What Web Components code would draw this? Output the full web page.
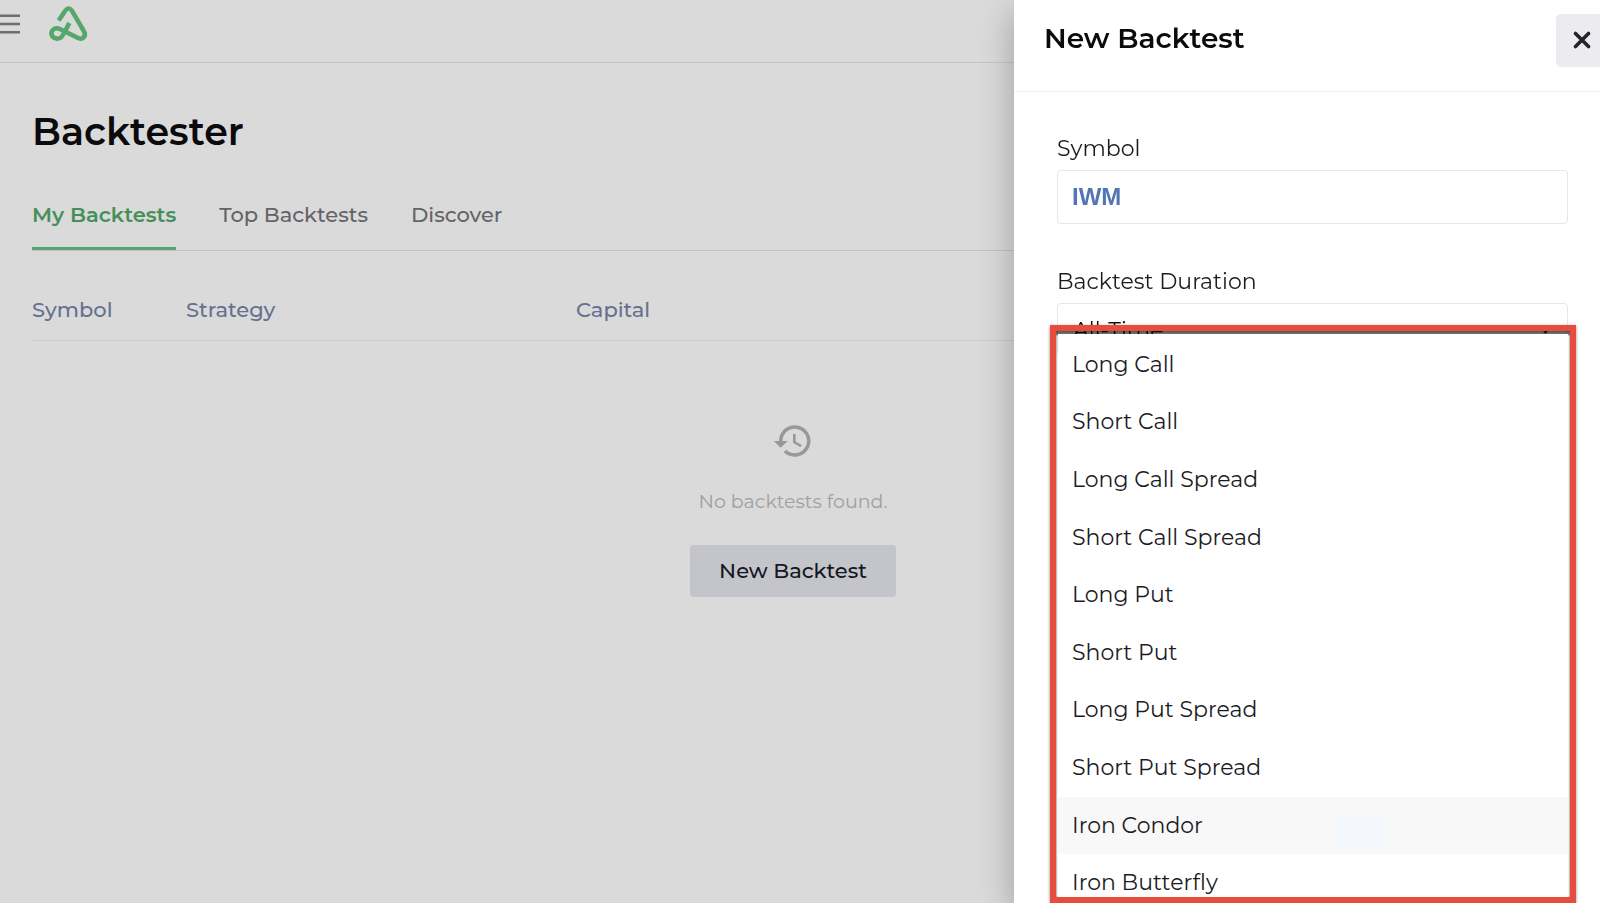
<!DOCTYPE html>
<html lang="en">
<head>
<meta charset="UTF-8">
<meta name="viewport" content="width=device-width, initial-scale=1">
<title>Backtester</title>
<style>
    body {
        margin: 0;
        min-height: 100vh;
        overflow: hidden;
        background: #dadada;
        color: #0b0b0d;
        font-family: Montserrat, "Open Sans", sans-serif;
    }
</style>
</head>
<body>
<app-header></app-header>

<backtest-page heading="Backtester">
    <tab-bar slot="tabs" tabs="My Backtests,Top Backtests,Discover"></tab-bar>
    <backtest-table></backtest-table>
    <empty-state action="New Backtest">No backtests found.</empty-state>
</backtest-page>

<side-panel heading="New Backtest">
    <text-field label="Symbol" value="IWM"></text-field>
    <select-field label="Backtest Duration" value="All-Time"></select-field>
    <strategy-menu slot="menu" active="Iron Condor"></strategy-menu>
</side-panel>

<script>
class AppHeader extends HTMLElement {
    constructor() {
        super();
        this.attachShadow({ mode: 'open' });
    }

    connectedCallback() {
        this.shadowRoot.innerHTML = `
            <style>
                :host {
                    display: flex;
                    align-items: center;
                    gap: 29px;
                    box-sizing: border-box;
                    height: 63px;
                    padding-bottom: 14px;
                    border-bottom: 1px solid #c6c6c6;
                }
                button {
                    border: 0;
                    padding: 0;
                    background: none;
                }
                svg { display: block; }
            </style>
            <button aria-label="Open menu">
                <svg width="20" height="20" viewBox="0 0 20 20" stroke="#6e6e6e" stroke-width="2.6">
                    <path d="M-2 1.7H20M-2 10H20M-2 18.3H20"/>
                </svg>
            </button>
            <a href="#" aria-label="Home">
                <svg width="39" height="37" viewBox="49 5.6 39 37" fill="none" stroke="#55a76b" stroke-width="4.6" stroke-linejoin="round">
                    <path d="M58.7 20.2L65.2 10.4Q68.6 5.9 72 10.4L84 31Q86.2 35.6 82.6 37.7Q80.5 38.8 77.5 37.3L60.5 28.9Q55.2 26.4 52.5 29.9Q50.4 33 52.6 36.2Q56 39.6 60.6 37.4Q62.6 36.2 69.3 22.6"/>
                </svg>
            </a>
        `;
    }
}

class BacktestPage extends HTMLElement {
    constructor() {
        super();
        this.attachShadow({ mode: 'open' });
    }

    connectedCallback() {
        this.shadowRoot.innerHTML = `
            <style>
                :host {
                    display: block;
                    padding: 46px 46px 0 32px;
                }
                h1 {
                    margin: 0 0 47px;
                    font-size: 38px;
                    line-height: 46px;
                    font-weight: 600;
                }
            </style>
            <h1>${this.getAttribute('heading')}</h1>
            <slot name="tabs"></slot>
            <slot></slot>
        `;
    }
}

class TabBar extends HTMLElement {
    constructor() {
        super();
        this.attachShadow({ mode: 'open' });
    }

    connectedCallback() {
        const tabs = this.getAttribute('tabs').split(',');
        this.shadowRoot.innerHTML = `
            <style>
                :host {
                    display: block;
                    border-bottom: 1px solid #c2c2c2;
                }
                nav {
                    display: flex;
                    gap: 43px;
                }
                a {
                    padding-bottom: 19px;
                    border-bottom: 3px solid transparent;
                    color: #646467;
                    font-size: 21px;
                    line-height: 26px;
                    font-weight: 500;
                    text-decoration: none;
                }
                .active {
                    color: #459059;
                    border-color: #55a670;
                    border-radius: 2px 2px 0 0;
                    font-weight: 600;
                }
            </style>
            <nav>
                ${tabs.map((tab, i) => `<a href="#" class="${i === 0 ? 'active' : ''}">${tab}</a>`).join('')}
            </nav>
        `;
    }
}

class BacktestTable extends HTMLElement {
    constructor() {
        super();
        this.attachShadow({ mode: 'open' });
    }

    connectedCallback() {
        this.shadowRoot.innerHTML = `
            <style>
                :host {
                    display: block;
                    margin-top: 46px;
                }
                table {
                    width: 100%;
                    table-layout: fixed;
                    border-collapse: separate;
                    border-spacing: 0;
                }
                th {
                    padding: 0 0 17px;
                    border-bottom: 1px solid #cacaca;
                    color: #66708f;
                    font-size: 21px;
                    line-height: 26px;
                    font-weight: 500;
                    text-align: left;
                }
                .symbol { width: 154px; }
                .strategy { width: 390px; }
            </style>
            <table>
                <thead>
                    <tr><th class="symbol">Symbol</th><th class="strategy">Strategy</th><th>Capital</th></tr>
                </thead>
            </table>
        `;
    }
}

class EmptyState extends HTMLElement {
    constructor() {
        super();
        this.attachShadow({ mode: 'open' });
    }

    connectedCallback() {
        this.shadowRoot.innerHTML = `
            <style>
                :host {
                    display: flex;
                    flex-direction: column;
                    align-items: center;
                    padding-top: 79px;
                }
                p {
                    margin: 28px 0 31px;
                    color: #a0a0a1;
                    font-size: 19px;
                    line-height: 24px;
                }
                button {
                    height: 52px;
                    padding: 0 29px;
                    border: 0;
                    border-radius: 4px;
                    background: #c4c5cb;
                    color: #15161f;
                    font: 500 21px/26px Montserrat, "Open Sans", sans-serif;
                }
            </style>
            <svg width="42" height="42" viewBox="0 0 24 24" fill="#989898">
                <path d="M13 3a9 9 0 0 0-9 9H1l3.9 3.9L9 12H6a7 7 0 1 1 2.06 4.94l-1.42 1.42A9 9 0 1 0 13 3zm-1 5v5l4.28 2.54.72-1.21-3.5-2.08V8z"/>
            </svg>
            <p><slot></slot></p>
            <button>${this.getAttribute('action')}</button>
        `;
    }
}

class SidePanel extends HTMLElement {
    constructor() {
        super();
        this.attachShadow({ mode: 'open' });
    }

    connectedCallback() {
        this.shadowRoot.innerHTML = `
            <style>
                :host {
                    position: fixed;
                    top: 0;
                    right: 0;
                    bottom: 0;
                    width: min(586px, 100%);
                    background: #fff;
                    box-shadow: 0 12px 32px rgba(0, 0, 0, 0.28);
                }
                header {
                    display: flex;
                    align-items: flex-start;
                    justify-content: space-between;
                    box-sizing: border-box;
                    height: 92px;
                    padding: 14px 0 0 30px;
                    border-bottom: 1px solid #f0f0f0;
                    overflow: hidden;
                }
                h2 {
                    margin: 0;
                    padding-top: 7px;
                    font-size: 28px;
                    line-height: 34px;
                    font-weight: 600;
                }
                /* the button runs past the panel's right edge */
                button {
                    display: grid;
                    place-items: center;
                    width: 53px;
                    height: 53px;
                    margin-right: -9px;
                    padding: 0 2px 2px 0;
                    border: 0;
                    border-radius: 5px;
                    background: #ebebf0;
                }
                .body {
                    display: flex;
                    flex-direction: column;
                    gap: 45px;
                    padding: 44px 32px 0 43px;
                }
            </style>
            <header>
                <h2>${this.getAttribute('heading')}</h2>
                <button aria-label="Close">
                    <svg width="18" height="18" viewBox="0 0 18 18" stroke="#23242e" stroke-width="3.6" stroke-linecap="round">
                        <path d="M2.5 2.5L15.5 15.5M15.5 2.5L2.5 15.5"/>
                    </svg>
                </button>
            </header>
            <div class="body"><slot></slot></div>
            <slot name="menu"></slot>
        `;
    }
}

const fieldStyles = `
    :host {
        display: flex;
        flex-direction: column;
        gap: 8px;
    }
    label {
        color: #1c1c1f;
        font-size: 22px;
        line-height: 26px;
    }
    input, select {
        box-sizing: border-box;
        width: 100%;
        height: 54px;
        border: 1px solid #e6e6e6;
        border-radius: 4px;
        background: #fff;
        outline: 0;
    }
`;

class TextField extends HTMLElement {
    constructor() {
        super();
        this.attachShadow({ mode: 'open' });
    }

    connectedCallback() {
        this.shadowRoot.innerHTML = `
            <style>
                ${fieldStyles}
                input {
                    padding: 0 14px;
                    color: #5275b4;
                    font: bold 24px "Liberation Sans", Arial, sans-serif;
                }
            </style>
            <label for="field">${this.getAttribute('label')}</label>
            <input id="field" type="text" value="${this.getAttribute('value')}">
        `;
    }
}

class SelectField extends HTMLElement {
    constructor() {
        super();
        this.attachShadow({ mode: 'open' });
    }

    connectedCallback() {
        this.shadowRoot.innerHTML = `
            <style>
                ${fieldStyles}
                .control {
                    display: grid;
                    align-items: center;
                }
                .control > * { grid-area: 1 / 1; }
                select {
                    appearance: none;
                    padding: 2px 15px 0;
                    color: #111;
                    font: 400 22px/26px Montserrat, "Open Sans", sans-serif;
                }
                svg {
                    justify-self: end;
                    margin-right: 17px;
                    pointer-events: none;
                }
            </style>
            <label for="field">${this.getAttribute('label')}</label>
            <div class="control">
                <select id="field"><option>${this.getAttribute('value')}</option></select>
                <svg width="11" height="7" viewBox="0 0 11 7" fill="#222"><path d="M0 0H11L5.5 7z"/></svg>
            </div>
        `;
    }
}

class StrategyMenu extends HTMLElement {
    constructor() {
        super();
        this.attachShadow({ mode: 'open' });
        this.strategies = [
            'Long Call', 'Short Call', 'Long Call Spread', 'Short Call Spread',
            'Long Put', 'Short Put', 'Long Put Spread', 'Short Put Spread',
            'Iron Condor', 'Iron Butterfly'
        ];
    }

    connectedCallback() {
        const active = this.getAttribute('active');
        this.shadowRoot.innerHTML = `
            <style>
                :host {
                    position: absolute;
                    top: 325px;
                    right: 24px;
                    bottom: 0;
                    left: 36px;
                    box-sizing: border-box;
                    border: 6px solid #e84c3d;
                    padding: 3px 2px 0;
                    overflow: hidden;
                    box-shadow: 0 1px 3px rgba(0, 0, 0, 0.45), inset 0 4px 2px rgba(0, 0, 0, 0.6), inset 0 0 2px rgba(0, 0, 0, 0.4);
                }
                ul {
                    display: grid;
                    grid-auto-rows: 1fr;
                    height: 576px;
                    margin: 0;
                    padding: 2px 0 0;
                    list-style: none;
                    background: #fff;
                }
                li { display: grid; }
                button {
                    display: flex;
                    align-items: center;
                    border: 0;
                    padding: 0 14px;
                    background: none;
                    color: #1c1c1f;
                    font: 400 22px/26px Montserrat, "Open Sans", sans-serif;
                    text-align: left;
                }
                .active { background: #f8f8f8; }
                .active::after {
                    content: '';
                    width: 53px;
                    height: 34px;
                    margin: 0 166px 4px auto;
                    align-self: flex-end;
                    background: #f4f8fc;
                }
            </style>
            <ul role="listbox" aria-label="Strategy">
                ${this.strategies.map(name => `
                    <li><button role="option" class="${name === active ? 'active' : ''}">${name}</button></li>
                `).join('')}
            </ul>
        `;
    }
}

customElements.define('app-header', AppHeader);
customElements.define('backtest-page', BacktestPage);
customElements.define('tab-bar', TabBar);
customElements.define('backtest-table', BacktestTable);
customElements.define('empty-state', EmptyState);
customElements.define('side-panel', SidePanel);
customElements.define('text-field', TextField);
customElements.define('select-field', SelectField);
customElements.define('strategy-menu', StrategyMenu);
</script>
</body>
</html>
